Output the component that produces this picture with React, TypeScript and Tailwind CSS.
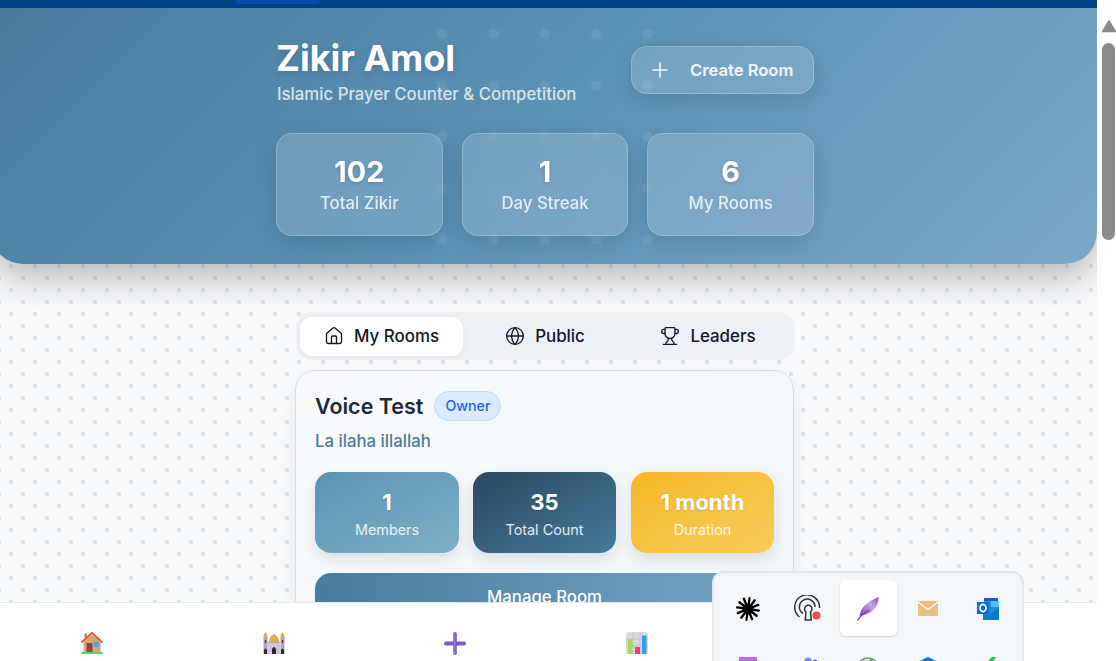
import React from "react";
import { Home, Globe, Trophy, Plus } from "lucide-react";

function StarField() {
  const xs = [0, 51.4, 102.8, 154.2, 205.6];
  const star = "M0 -13 L3.6 -4.6 L12.4 -4 L5.6 1.8 L7.8 10.6 L0 5.8 L-7.8 10.6 L-5.6 1.8 L-12.4 -4 L-3.6 -4.6 Z";
  return (
    <svg className="absolute left-[429px] top-[4px] pointer-events-none" width="250" height="252" viewBox="0 0 250 252">
      {xs.map((y) =>
        xs.map((x) => (
          <g key={`${x}-${y}`} transform={`translate(${x + 22} ${y + 22})`}>
            <path d={star} fill="#ffffff" fillOpacity="0.025" />
            <circle r="5" fill="#ffffff" fillOpacity="0.07" />
          </g>
        ))
      )}
    </svg>
  );
}

function HeroStat({ value, label }: { value: string; label: string }) {
  return (
    <div className="h-[103px] flex-1 rounded-2xl border border-white/20 bg-white/15 backdrop-blur-md shadow-[0_8px_24px_rgba(0,0,0,0.12)] flex flex-col items-center pt-[20px]">
      <div className="text-[28.8px] leading-[36px] font-bold text-white [text-shadow:0_2px_4px_rgba(0,0,0,0.15)]">{value}</div>
      <div className="mt-[1px] text-[16.8px] leading-[24px] font-[550] text-white/80">{label}</div>
    </div>
  );
}

function Tile({ value, label, cls, w }: { value: string; label: string; cls: string; w: string }) {
  return (
    <div className={`${w} h-[81px] rounded-2xl flex flex-col items-center pt-[16px] text-white shadow-[0_6px_14px_rgba(0,0,0,0.1)] ${cls}`}>
      <div className="text-[22px] leading-[28px] font-bold [text-shadow:0_1px_3px_rgba(0,0,0,0.12)]">{value}</div>
      <div className="mt-[4px] text-[14.4px] leading-[20px] text-white/85">{label}</div>
    </div>
  );
}

function Tab({ icon, label, active, w }: { icon: React.ReactNode; label: string; active?: boolean; w: string }) {
  return (
    <div className={`${w} h-[39px] rounded-xl flex items-center justify-center gap-[10px] text-[16.9px] font-[450] text-[#111827] ${active ? "bg-white shadow-[0_2px_6px_rgba(0,0,0,0.05)]" : ""}`}>
      {icon}
      <span className="translate-y-[1px]">{label}</span>
    </div>
  );
}

const HouseEmoji = () => (
  <svg width="22" height="22" viewBox="0 0 22 22">
    <rect x="3.5" y="1.5" width="2.5" height="6" fill="#c98a5e" />
    <path d="M2.5 9.5 L11 2.5 L19.5 9.5 V20 H2.5 Z" fill="#dda573" />
    <path d="M0.5 10.5 L11 0.8 L21.5 10.5" fill="none" stroke="#e8573a" strokeWidth="1.9" />
    <rect x="5.5" y="11" width="6" height="9" fill="#7a4f45" />
    <rect x="12.8" y="10" width="5" height="5" fill="#3ba9ee" />
    <rect x="0.5" y="20" width="21" height="2" fill="#4fd56f" />
  </svg>
);

const MosqueEmoji = () => (
  <svg width="22" height="22" viewBox="0 0 22 22">
    <rect x="0.5" y="5" width="4" height="17" fill="#b0a5b6" />
    <rect x="17.5" y="5" width="4" height="17" fill="#b0a5b6" />
    <rect x="4.5" y="10" width="13" height="12" fill="#cfc7d3" />
    <path d="M0.5 5 Q0.5 2.5 2.5 0 Q4.5 2.5 4.5 5 Z" fill="#f5a83a" />
    <path d="M17.5 5 Q17.5 2.5 19.5 0 Q21.5 2.5 21.5 5 Z" fill="#f5a83a" />
    <path d="M6 9.5 Q6 5 11 2 Q16 5 16 9.5 Z" fill="#f0a93e" />
    <rect x="5.5" y="9.5" width="11" height="1" fill="#8f8396" />
    <path d="M9 22 V17 Q11 13 13 17 V22 Z" fill="#33203f" />
    <path d="M1 22 V18 Q2.5 15 4 18 V22 Z" fill="#33203f" />
    <path d="M18 22 V18 Q19.5 15 21 18 V22 Z" fill="#33203f" />
    <rect x="1.8" y="8" width="1.4" height="3" fill="#4a3a56" />
    <rect x="18.8" y="8" width="1.4" height="3" fill="#4a3a56" />
  </svg>
);

const PlusEmoji = () => (
  <svg width="22" height="23" viewBox="0 0 22 23">
    <rect x="9.2" y="0" width="3.6" height="23" rx="1.8" fill="#7a5cc4" />
    <rect x="0" y="9.5" width="22" height="4" rx="2" fill="#7a5cc4" />
    <rect x="10.2" y="1" width="1" height="21" fill="#9a80dc" />
  </svg>
);

const ChartEmoji = () => (
  <svg width="22" height="22" viewBox="0 0 22 22">
    <rect x="0" y="0" width="22" height="22" rx="3" fill="#dcd8de" />
    <path d="M0 7H22M0 14H22M7 0V22M14 0V22" stroke="#c2bdc5" strokeWidth="0.8" />
    <rect x="2" y="7" width="4.5" height="15" fill="#a3dc5c" />
    <rect x="9" y="15" width="5" height="7" fill="#e8407f" />
    <rect x="16" y="3.5" width="4.5" height="18.5" fill="#2f9df0" />
  </svg>
);

const Burst = () => (
  <svg width="24" height="24" viewBox="-12 -12 24 24">
    {Array.from({ length: 12 }).map((_, i) => (
      <line key={i} x1="0" y1="0" x2="0" y2="-11" stroke="#000" strokeWidth="2.3" strokeLinecap="round" transform={`rotate(${i * 30 + 8})`} />
    ))}
    <circle r="5.5" fill="#000" />
  </svg>
);

const Hotspot = () => (
  <svg width="28" height="28" viewBox="0 0 28 28">
    <g fill="none" stroke="#333" strokeWidth="1.5">
      <path d="M5.5 22 A12.4 12.4 0 1 1 25.5 13" />
      <path d="M9 18.5 A7.8 7.8 0 1 1 21 12" />
      <path d="M12 17 A3.7 3.7 0 1 1 16.5 17 L17.3 25 H11.2 Z" />
    </g>
    <circle cx="22.5" cy="20.5" r="4" fill="#e8504f" />
  </svg>
);

const Feather = () => (
  <svg width="24" height="26" viewBox="0 0 24 26">
    <defs>
      <linearGradient id="fth" x1="0" y1="1" x2="1" y2="0">
        <stop offset="0" stopColor="#7b3fb5" />
        <stop offset="0.6" stopColor="#c3a8e4" />
        <stop offset="1" stopColor="#8a52c4" />
      </linearGradient>
    </defs>
    <path d="M22.5 1 C23 8 19 14 13 17 C9 19 5 19.5 3.5 20.5 C4 13 10 6 22.5 1 Z" fill="url(#fth)" />
    <path d="M1.5 24.5 C4 20 8 17 13 14" stroke="#7b3fb5" strokeWidth="1.4" fill="none" />
  </svg>
);

const Mail = () => (
  <svg width="20" height="15" viewBox="0 0 20 15">
    <rect width="20" height="15" fill="#e8c07f" />
    <path d="M0 1 L10 8.5 L20 1" fill="none" stroke="#fff" strokeWidth="1.1" />
  </svg>
);

const Outlook = () => (
  <svg width="22" height="22" viewBox="0 0 22 22">
    <rect x="7" y="0" width="14" height="9" fill="#0f62b8" />
    <rect x="14" y="3" width="8" height="7" fill="#4dc3f5" />
    <rect x="7" y="3" width="7" height="6" fill="#1e90de" />
    <path d="M6 9 H22 V22 H6 Z" fill="#1c8fdc" />
    <path d="M6 10 L14 16 L22 10 V22 H6 Z" fill="#0f7acb" />
    <rect x="0" y="4" width="12" height="12" fill="#0a6fc6" />
    <ellipse cx="6" cy="10" rx="3" ry="3.6" fill="none" stroke="#fff" strokeWidth="1.6" />
  </svg>
);

const trayClipped = [
  <div key="a" className="w-[18px] h-[18px] bg-[#c06ae0]" />,
  <svg key="b" width="22" height="18" viewBox="0 0 22 18"><circle cx="11" cy="4" r="3.5" fill="#7b83eb" /><circle cx="18" cy="5" r="2.5" fill="#5059c9" /></svg>,
  <svg key="c" width="24" height="18" viewBox="0 0 24 18"><circle cx="12" cy="12" r="11" fill="#d8dcd8" stroke="#8a8f8a" strokeWidth="1.5" /><path d="M9 5 L12 8 L16 2" fill="none" stroke="#3fae4a" strokeWidth="2" /></svg>,
  <svg key="d" width="22" height="18" viewBox="0 0 22 18"><path d="M0 5 L11 0 L22 5 V18 H0 Z" fill="#28a8ea" /><path d="M6 3 L11 0 L16 3 V6 H6 Z" fill="#0f78d4" /></svg>,
  <svg key="e" width="16" height="18" viewBox="0 0 16 18"><path d="M0 12 L12 0 L16 0 L8 12 Z" fill="#1fc45e" /><path d="M4 12 L8 6 L12 9 L8 18 H0 Z" fill="#0b8a3e" /></svg>,
];

export default function App() {
  return (
    <div className="relative flex h-[661px] w-[1116px] overflow-hidden bg-white font-['Inter','Liberation_Sans',sans-serif]">
      <div className="flex h-full w-[1097px] flex-col overflow-hidden bg-[#f8fafc] bg-[radial-gradient(circle_at_6px_2px,#dbe7ee_2.2px,transparent_2.3px),radial-gradient(circle_at_18px_14px,#dbe7ee_2.2px,transparent_2.3px)] bg-[length:24px_24px] bg-[position:5px_0]">
        <div className="relative z-20 h-2 w-[1116px] shrink-0 bg-[#004085]">
          <div className="ml-[236px] h-[4px] w-[84px] rounded-b-md bg-[#0550a8]" />
        </div>

        <div className="min-h-0 flex-1 overflow-hidden">
          <header className="relative z-10 -ml-[9px] h-[256px] rounded-b-[32px] bg-[linear-gradient(135deg,#4a7c9e,#5b92b7_50%,#7ba7c7)] pl-[285px] shadow-[0_15px_35px_rgba(0,0,0,0.25)]">
            <StarField />
            <div className="relative w-[538px] pt-[30px]">
              <div className="flex items-start justify-between">
                <div>
                  <h1 className="text-[36px] leading-[40px] font-bold text-white [text-shadow:0_2px_6px_rgba(0,0,0,0.15)]">Zikir Amol</h1>
                  <p className="ml-[1px] mt-[4px] text-[16.8px] leading-[24px] font-[550] text-[#d4e5f0]">Islamic Prayer Counter &amp; Competition</p>
                </div>
                <button className="mt-[8px] flex h-[48px] w-[183px] items-center rounded-2xl border border-white/20 bg-white/15 pl-[16px] text-[16.6px] font-semibold text-[#f2f7fb] shadow-[0_6px_20px_rgba(0,0,0,0.12)]">
                  <Plus size={24} strokeWidth={1.5} className="text-white" />
                  <span className="ml-[18px]">Create Room</span>
                </button>
              </div>
              <div className="mt-[27px] flex gap-[19px]">
                <HeroStat value="102" label="Total Zikir" />
                <HeroStat value="1" label="Day Streak" />
                <HeroStat value="6" label="My Rooms" />
              </div>
            </div>
          </header>

          <section className="ml-[295px] w-[500px] pt-[48px]">
            <div className="ml-[1px] flex h-[48px] w-[499px] items-center rounded-2xl bg-[#eef1f6] pl-[4px]">
              <Tab w="w-[163px]" active icon={<Home size={20} strokeWidth={1.6} />} label="My Rooms" />
              <Tab w="w-[164px]" icon={<Globe size={20} strokeWidth={1.6} />} label="Public" />
              <Tab w="w-[162px]" icon={<Trophy size={20} strokeWidth={1.6} />} label="Leaders" />
            </div>

            <div className="mt-[10px] h-[300px] w-[499px] rounded-t-[20px] border border-[#cfe0ec] bg-gradient-to-br from-[#f8fafc] to-[#f1f5f9] px-[19px] pt-[19px] shadow-[0_8px_24px_rgba(0,0,0,0.06)]">
              <div className="flex items-center gap-[11px]">
                <h2 className="text-[21.5px] leading-[32px] font-semibold text-[#1f2937]">Voice Test</h2>
                <span className="flex h-[30px] w-[67px] items-center justify-center rounded-full border border-[#bfdbfe] bg-[#dbeafe] text-[14.2px] font-medium text-[#2563eb]">Owner</span>
              </div>
              <p className="mt-[6px] text-[16.8px] leading-[26px] font-[450] text-[#4a7c9e]">La ilaha illallah</p>
              <div className="mt-[18px] flex">
                <Tile w="w-[144px] mr-[14px]" cls="bg-gradient-to-br from-[#5b93b5] to-[#7cb0c4]" value="1" label="Members" />
                <Tile w="w-[143px] mr-[15px]" cls="bg-gradient-to-br from-[#2a4a5f] to-[#457a9c]" value="35" label="Total Count" />
                <Tile w="w-[143px]" cls="bg-gradient-to-br from-[#f5b822] to-[#f7cd5a]" value="1 month" label="Duration" />
              </div>
              <button className="mt-[20px] flex h-[50px] w-[459px] items-center justify-center rounded-t-2xl bg-gradient-to-r from-[#4a7c9e] to-[#74a5c4] text-[16.8px] font-medium text-white">Manage Room</button>
            </div>
          </section>
        </div>

        <nav className="relative z-20 grid h-[59px] w-[1116px] shrink-0 grid-cols-[repeat(6,181.6px)] border-t border-[#e2e8f0] bg-white pl-[1.5px]">
          <div className="flex justify-center pt-[29px]"><HouseEmoji /></div>
          <div className="flex justify-center pt-[29px]"><MosqueEmoji /></div>
          <div className="flex justify-center pt-[29px]"><PlusEmoji /></div>
          <div className="flex justify-center pt-[29px]"><ChartEmoji /></div>
        </nav>
      </div>

      <aside className="relative z-30 h-[602px] w-[19px] shrink-0 bg-white">
        <svg className="ml-[5px] mt-[20px] block" width="14" height="13" viewBox="0 0 14 13">
          <path d="M7 1 L13.4 11.5 H0.6 Z" fill="#8a8a8a" stroke="#8a8a8a" strokeWidth="1.5" strokeLinejoin="round" />
        </svg>
        <div className="ml-[5px] mt-[10px] h-[197px] w-[13px] rounded-full bg-[#8a8a8a]" />
      </aside>

      <div className="absolute left-[712px] top-[571px] z-40 h-[110px] w-[312px] rounded-xl border-2 border-[#e4e6e8] bg-[#f4f7fa]">
        <div className="absolute left-[126px] top-[7px] h-[56px] w-[57px] rounded-md bg-white shadow-[0_1px_2px_rgba(0,0,0,0.15)]" />
        <div className="relative grid grid-cols-[repeat(5,60px)] pl-[4px] pt-[7px]">
          <div className="flex h-[57px] items-center justify-center"><Burst /></div>
          <div className="flex h-[57px] items-center justify-center"><Hotspot /></div>
          <div className="flex h-[57px] items-center justify-center"><Feather /></div>
          <div className="flex h-[57px] items-center justify-center"><Mail /></div>
          <div className="flex h-[57px] items-center justify-center"><Outlook /></div>
          {trayClipped.map((icon, i) => (
            <div key={i} className="flex h-[30px] items-start justify-center pt-[20px]">{icon}</div>
          ))}
        </div>
      </div>
    </div>
  );
}
